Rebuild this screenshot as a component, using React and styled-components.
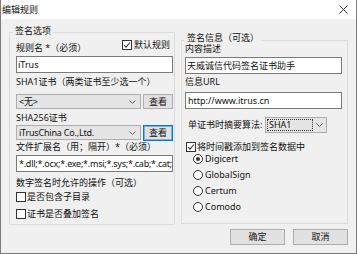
import React from "react";
import styled, { createGlobalStyle } from "styled-components";

const Global = createGlobalStyle`
  html, body { margin: 0; padding: 0; background: #ffffff; }
  body {
    font-family: "Noto Sans", "Noto Sans CJK SC", sans-serif;
    font-size: 9px;
    color: #111;
  }
  * { box-sizing: border-box; }
`;

const Window = styled.div`
  width: 357px;
  height: 254px;
  background: #f0f0f0;
  border: 1px solid #7a7a7a;
  border-top: none;
  display: flex;
  flex-direction: column;
`;

const TitleBar = styled.div`
  height: 19px;
  background: #ffffff;
  display: flex;
  align-items: center;
  justify-content: space-between;
  padding: 0 8px 0 1px;
  line-height: 12px;
  flex: none;
`;

const Main = styled.div`
  display: flex;
  align-items: flex-start;
  padding: 13px 0 0 8px;
`;

const Group = styled.div`
  position: relative;
  border: 1px solid #dcdcdc;
  width: ${(p) => p.$w}px;
  margin-top: ${(p) => p.$mt || 0}px;
  margin-left: ${(p) => p.$ml || 0}px;
  padding: ${(p) => p.$pad};
  display: flex;
  flex-direction: column;
`;

const Legend = styled.span`
  position: absolute;
  left: 3px;
  top: ${(p) => p.$top}px;
  padding: 0 2px;
  line-height: 10px;
  background: #f0f0f0;
  white-space: nowrap;
`;

const Label = styled.div`
  line-height: 12px;
  height: 12px;
  margin-top: ${(p) => p.$mt || 0}px;
  white-space: nowrap;
`;

const HeadRow = styled.div`
  display: flex;
  justify-content: space-between;
  align-items: flex-start;
  height: 15px;
  margin-top: 6px;
`;

const TextBox = styled.div`
  height: 17px;
  margin-top: ${(p) => p.$mt || 0}px;
  border: 1px solid #7a7a7a;
  background: #ffffff;
  padding-left: ${(p) => p.$pl || 1}px;
  line-height: 15px;
  letter-spacing: ${(p) => p.$ls || 0}px;
  white-space: nowrap;
  overflow: hidden;
`;

const PickRow = styled.div`
  display: flex;
  gap: 2px;
  height: 15px;
  margin-top: ${(p) => p.$mt || 0}px;
`;

const Combo = styled.div`
  flex: 1;
  border: 1px solid #adadad;
  background: #e5e5e5;
  display: flex;
  align-items: center;
  justify-content: space-between;
  padding: 0 4px 0 2px;
  line-height: 12px;
  letter-spacing: -0.2px;
  white-space: nowrap;
`;

const Button = styled.div`
  width: ${(p) => p.$w}px;
  height: ${(p) => p.$h}px;
  background: #e1e1e1;
  border: 1px solid ${(p) => (p.$focus ? "#0078d7" : "#adadad")};
  box-shadow: ${(p) => (p.$focus ? "inset 0 0 0 1px rgba(0,120,215,0.45)" : "none")};
  display: flex;
  align-items: center;
  justify-content: center;
  line-height: 12px;
`;

const CheckRow = styled.label`
  display: flex;
  align-items: center;
  gap: ${(p) => p.$gap || 2}px;
  height: 12px;
  line-height: 12px;
  margin-top: ${(p) => p.$mt || 0}px;
  margin-right: ${(p) => p.$mr || 0}px;
  padding-left: ${(p) => p.$pl || 0}px;
  white-space: nowrap;
`;

const Box = styled.span`
  width: 10px;
  height: 10px;
  border: 1px solid #333333;
  background: #ffffff;
  display: flex;
  align-items: center;
  justify-content: center;
  flex: none;
`;

const Circle = styled.span`
  width: 10px;
  height: 10px;
  border-radius: 50%;
  border: 1px solid #333333;
  background: #ffffff;
  display: flex;
  align-items: center;
  justify-content: center;
  flex: none;
`;

const Dot = styled.span`
  width: 4px;
  height: 4px;
  border-radius: 50%;
  background: #333333;
`;

const AlgoRow = styled.div`
  display: flex;
  align-items: center;
  height: 16px;
  margin-top: 8px;
  padding-left: 3px;
`;

const AlgoLabel = styled.span`
  width: 77px;
  line-height: 12px;
  white-space: nowrap;
`;

const AlgoCombo = styled.div`
  width: 62px;
  height: 16px;
  border: 1px solid #adadad;
  background: #e5e5e5;
  display: flex;
  align-items: center;
  padding: 1px 3px 1px 1px;
  gap: 3px;
`;

const FocusText = styled.span`
  flex: 1;
  height: 12px;
  border: 1px dotted #333333;
  line-height: 10px;
  padding-left: 1px;
`;

const RadioList = styled.div`
  display: flex;
  flex-direction: column;
  gap: 4px;
`;

const Footer = styled.div`
  display: flex;
  justify-content: flex-end;
  gap: 8px;
  margin-top: 4px;
  padding-right: 8px;
`;

const Chevron = () => (
  <svg width="7" height="4" viewBox="0 0 7 4">
    <polyline points="0.5,0.5 3.5,3.5 6.5,0.5" fill="none" stroke="#606060" strokeWidth="1" />
  </svg>
);

const Tick = () => (
  <svg width="8" height="8" viewBox="0 0 8 8">
    <polyline points="1,4 3,6.2 7,1.5" fill="none" stroke="#333" strokeWidth="1.1" />
  </svg>
);

const Check = ({ checked, children, ...rest }) => (
  <CheckRow {...rest}>
    <Box>{checked && <Tick />}</Box>
    <span>{children}</span>
  </CheckRow>
);

const Radio = ({ checked, children }) => (
  <CheckRow $gap={2} $pl={8}>
    <Circle>{checked && <Dot />}</Circle>
    <span>{children}</span>
  </CheckRow>
);

export default function App() {
  return (
    <>
      <Global />
      <Window>
        <TitleBar>
          <span>编辑规则</span>
          <svg width="9" height="9" viewBox="0 0 9 9">
            <path d="M0.5 0.5 L8.5 8.5 M8.5 0.5 L0.5 8.5" stroke="#333" strokeWidth="1" />
          </svg>
        </TitleBar>
        <Main>
          <Group $w={166} $pad="0 1px 4px 6px">
            <Legend $top={-7}>签名选项</Legend>
            <HeadRow>
              <Label $mt={3}>规则名 *（必须）</Label>
              <Check checked $mr={3}>默认规则</Check>
            </HeadRow>
            <TextBox $mt={2}>iTrus</TextBox>
            <Label $mt={3}>SHA1证书（两类证书至少选一个）</Label>
            <PickRow $mt={6}>
              <Combo>
                <span>&lt;无&gt;</span>
                <Chevron />
              </Combo>
              <Button $w={30} $h={15}>查看</Button>
            </PickRow>
            <Label $mt={3}>SHA256证书</Label>
            <PickRow $mt={1}>
              <Combo>
                <span>iTrusChina Co.,Ltd.</span>
                <Chevron />
              </Combo>
              <Button $w={30} $h={16} $focus>查看</Button>
            </PickRow>
            <Label $mt={1}>文件扩展名（用；隔开）*（必须）</Label>
            <TextBox $mt={2} $pl={2} $ls={-0.25}>*.dll;*.ocx;*.exe;*.msi;*.sys;*.cab;*.cat;</TextBox>
            <Label $mt={5}>数字签名时允许的操作（可选）</Label>
            <Check $mt={2} $gap={1}>是否包含子目录</Check>
            <Check $mt={5} $gap={1}>证书是否叠加签名</Check>
          </Group>
          <Group $w={167} $mt={8} $ml={6} $pad="0 5px 10px 3px">
            <Legend $top={-8}>签名信息（可选）</Legend>
            <Label $mt={2}>内容描述</Label>
            <TextBox $mt={2}>天威诚信代码签名证书助手</TextBox>
            <Label $mt={2}>信息URL</Label>
            <TextBox $mt={4} $pl={2}>http://www.itrus.cn</TextBox>
            <AlgoRow>
              <AlgoLabel>单证书时摘要算法:</AlgoLabel>
              <AlgoCombo>
                <FocusText>SHA1</FocusText>
                <Chevron />
              </AlgoCombo>
            </AlgoRow>
            <Check checked $mt={8} $pl={1} $gap={1}>将时间戳添加到签名数据中</Check>
            <RadioList>
              <Radio checked>Digicert</Radio>
              <Radio>GlobalSign</Radio>
              <Radio>Certum</Radio>
              <Radio>Comodo</Radio>
            </RadioList>
          </Group>
        </Main>
        <Footer>
          <Button $w={55} $h={16}>确定</Button>
          <Button $w={55} $h={16}>取消</Button>
        </Footer>
      </Window>
    </>
  );
}
